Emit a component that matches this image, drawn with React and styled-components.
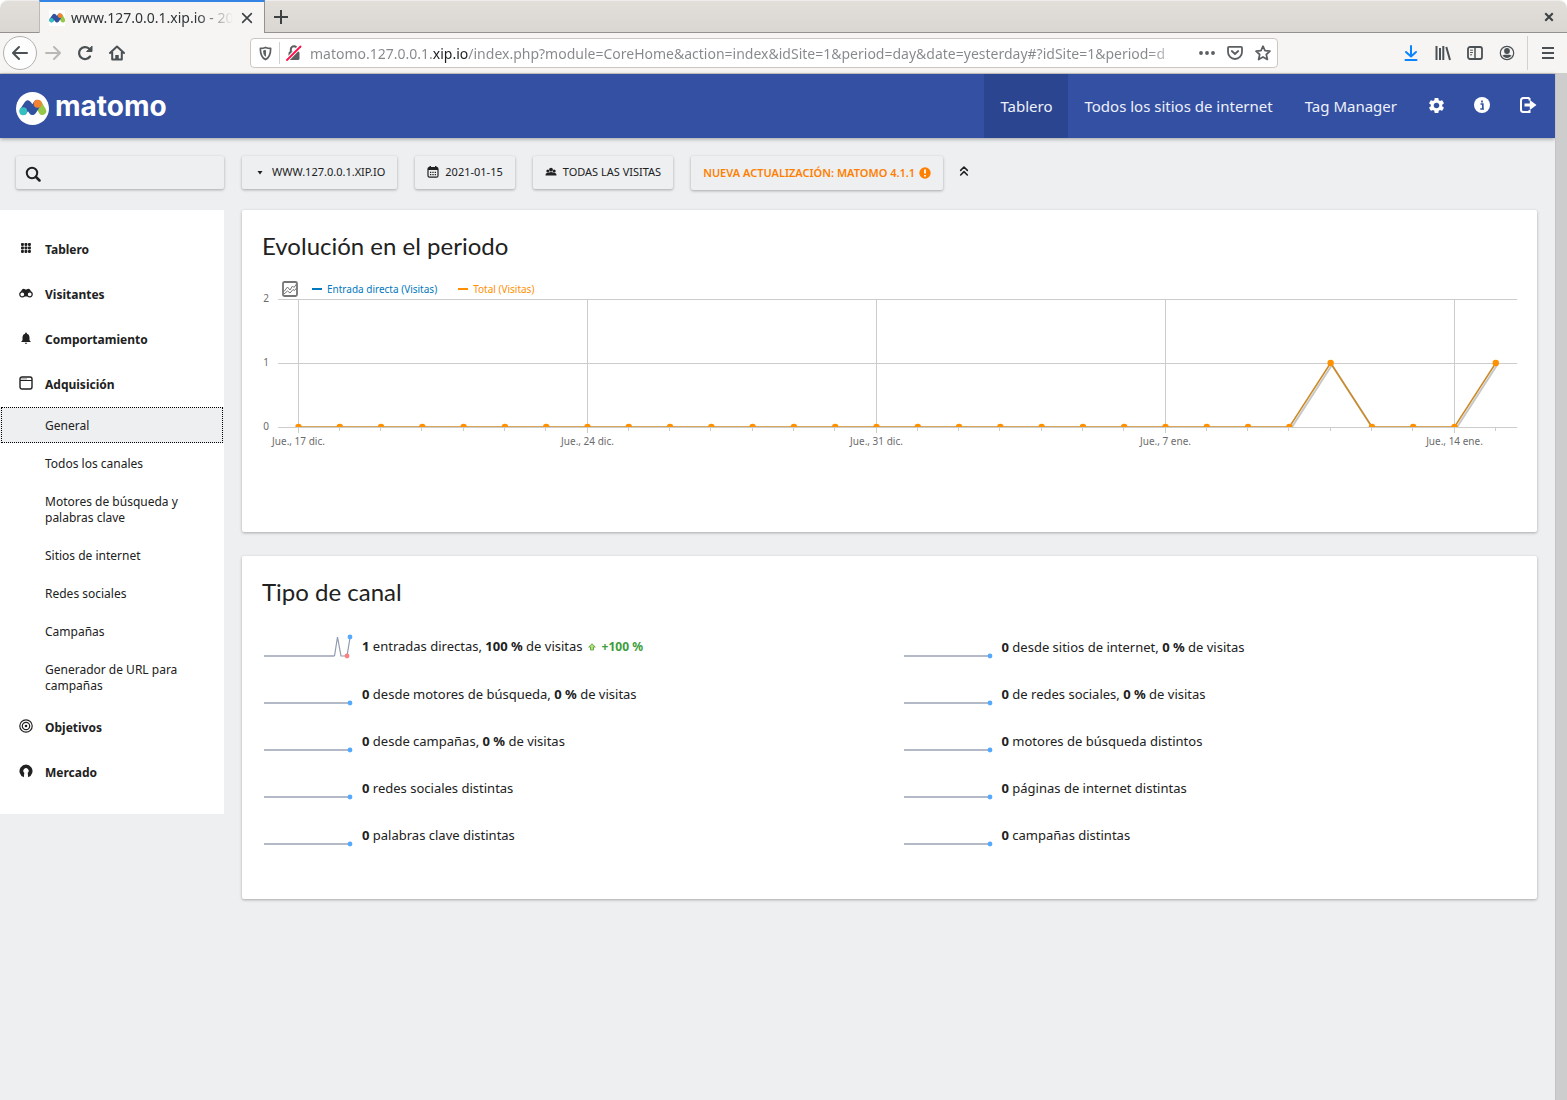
import React from 'react';
import styled, { createGlobalStyle, css } from 'styled-components';
import { MdSettings, MdNotifications } from 'react-icons/md';
import { ChevronsUp } from 'lucide-react';

const text = '"Noto Sans", "Open Sans", sans-serif';
const display = 'Lato, "Noto Sans", sans-serif';
const ink = '#212121';
const chromeInk = '#4a5053';

const GlobalStyle = createGlobalStyle`
  * { box-sizing: border-box; }
  body { margin: 0; background: #fff; font-family: ${text}; color: ${ink}; }
  button { border: 0; padding: 0; background: none; color: inherit; font: inherit; cursor: pointer; }
  a { color: inherit; text-decoration: none; }
  svg { display: block; flex: none; }
`;

const Window = styled.div`
  display: flex;
  flex-direction: column;
  min-height: 100vh;
`;

/* Browser frame */
const TabStrip = styled.div`
  display: flex;
  align-items: stretch;
  height: 33px;
  padding-left: 39px;
  background: linear-gradient(#e2dfdb, #dad6d2);
  border-bottom: 1px solid #94918e;
  border-top: 1px solid #efedeb;
  border-radius: 8px 8px 0 0;
`;
const Tab = styled.div`
  display: flex;
  align-items: center;
  gap: 6px;
  width: 226px;
  margin: -1px 0;
  padding: 0 9px;
  background: #f6f5f4;
  border-top: 2px solid #3584e4;
  border-left: 1px solid #bfbab5;
  border-right: 1px solid #94918e;
`;
const Favicon = styled.span`
  padding: 0;
  background: #fff;
`;
const TabTitle = styled.span`
  flex: 1;
  overflow: hidden;
  white-space: nowrap;
  font-size: 14px;
  line-height: 20px;
  color: #2e3436;
  mask-image: linear-gradient(to left, transparent, #000 36px);
`;
const StripButton = styled.button`
  display: grid;
  place-items: center;
  width: ${(p) => p.$width}px;
  color: #3c4144;
`;
const StripSpacer = styled.div`
  flex: 1;
`;
const Toolbar = styled.div`
  display: flex;
  align-items: center;
  height: 41px;
  padding: 0 3px;
  background: #f6f5f4;
  border-bottom: 1px solid #d0ccc8;
  color: ${chromeInk};
`;
const ToolButton = styled.button`
  display: grid;
  place-items: center;
  width: 32px;
  height: 32px;
  color: ${(p) => p.$color || 'inherit'};
  ${(p) => p.$round && css`
    width: 34px;
    height: 34px;
    border: 1px solid #b3b1af;
    border-radius: 50%;
    background: #fdfdfd;
  `}
`;
const Address = styled.div`
  display: flex;
  align-items: center;
  flex: 1;
  height: 30px;
  margin: 0 117px;
  border: 1px solid #cdc7c2;
  border-radius: 4px;
  background: #fff;
  color: #5b5f61;
`;
const AddressButton = styled.button`
  display: grid;
  place-items: center;
  width: 28px;
  height: 28px;
`;
const Rule = styled.span`
  width: 1px;
  height: ${(p) => p.$height}px;
  margin: 0 ${(p) => p.$gap || 0}px;
  background: #d3d1cf;
`;
const AddressInput = styled.input`
  flex: 1;
  min-width: 0;
  height: 28px;
  margin: 0 5px 0 2px;
  padding: 0;
  border: 0;
  outline: 0;
  font: 14px ${text};
  color: transparent;
  background: linear-gradient(to right, #85888a 122px, #1c1f20 122px, #1c1f20 158px, #85888a 158px, #85888a calc(100% - 40px), transparent);
  background-clip: text;
`;

/* Page */
const Viewport = styled.div`
  display: flex;
  flex: 1;
`;
const Page = styled.div`
  flex: 1;
  min-width: 0;
  background: #edeff1;
`;
const Scrollbar = styled.div`
  width: 12px;
  background: #cdcdcd;
  border-left: 1px solid #c4c4c4;
`;
const Header = styled.header`
  display: flex;
  align-items: center;
  justify-content: space-between;
  height: 64px;
  padding: 0 4px 0 16px;
  background: #3450a3;
  color: #fff;
  box-shadow: 0 1px 4px rgba(0, 0, 0, 0.35);
`;
const Brand = styled.a`
  display: flex;
  align-items: center;
  gap: 6px;
  padding-top: 4px;
`;
const Wordmark = styled.span`
  font: 700 28px/32px Inter, sans-serif;
  padding-bottom: 4px;
`;
const Nav = styled.nav`
  display: flex;
  height: 64px;
`;
const NavLink = styled.a`
  display: flex;
  align-items: center;
  padding: 0 16px;
  font-size: 15px;
  line-height: 20px;
  color: #eef1f8;
  background: ${(p) => (p.$active ? '#2c4590' : 'transparent')};
`;
const NavIcon = styled.a`
  display: grid;
  place-items: center;
  width: 46px;
  height: 62px;
`;
const Controls = styled.div`
  display: flex;
  gap: 18px;
  align-items: flex-start;
  padding: 18px 18px 0 16px;
`;
const raised = css`
  border-radius: 2px;
  box-shadow: 0 1px 3px rgba(0, 0, 0, 0.3);
`;
const Search = styled.label`
  display: flex;
  align-items: center;
  gap: 8px;
  width: 208px;
  height: 33px;
  padding: 2px 9px 0;
  ${raised}
`;
const SearchInput = styled.input`
  flex: 1;
  min-width: 0;
  border: 0;
  outline: 0;
  background: none;
  font: 13px ${text};
`;
const Control = styled.button`
  display: flex;
  align-items: center;
  gap: 6px;
  height: 33px;
  padding: 0 12px 1px;
  font-size: 11px;
  line-height: 16px;
  text-transform: uppercase;
  white-space: nowrap;
  ${raised}
  ${(p) => p.$alert && css`
    gap: 4px;
    height: 34px;
    padding-bottom: 0;
    font-weight: 600;
    color: #ff7f00;
  `}
`;
const Collapse = styled.button`
  display: grid;
  place-items: center;
  width: 14px;
  height: 30px;
  margin-left: -5px;
`;
const Body = styled.div`
  display: flex;
  align-items: flex-start;
  gap: 18px;
  padding: 20px 18px 24px 0;
`;
const Sidebar = styled.nav`
  flex: none;
  width: 224px;
  padding: 16px 0 20px;
  background: #fff;
`;
const Group = styled.a`
  display: flex;
  align-items: center;
  gap: 12px;
  height: 45px;
  padding: 2px 0 0 19px;
  font-size: 12px;
  font-weight: 700;
`;
const GroupIcon = styled.span`
  display: grid;
  place-items: center;
  width: 14px;
  height: 17px;
  padding-bottom: 3px;
`;
const SubLink = styled.a`
  display: block;
  padding: 12px 40px 10px 45px;
  font-size: 12px;
  line-height: 16px;
  ${(p) => p.$active && css`
    background: #edeff1;
    outline: 1px dotted #000;
    outline-offset: -2px;
    border: solid #fff;
    border-width: 1px 0;
    padding-top: 11px;
    padding-bottom: 9px;
  `}
`;
const Main = styled.main`
  flex: 1;
  min-width: 0;
  display: flex;
  flex-direction: column;
  gap: 24px;
`;
const Card = styled.section`
  padding: 20px;
  background: #fff;
  ${raised}
`;
const Title = styled.h2`
  margin: 0;
  font: 400 24px/32px ${display};
`;
const Legend = styled.div`
  display: flex;
  align-items: center;
  gap: 14px;
  height: 18px;
  margin-top: 18px;
  padding-left: 20px;
`;
const Series = styled.span`
  display: flex;
  align-items: center;
  gap: 5px;
  margin-right: 7px;
  font-size: 10px;
  line-height: 16px;
  color: ${(p) => p.$color};

  &::before {
    content: '';
    width: 10px;
    height: 2px;
    background: currentColor;
  }
`;
const Plot = styled.svg`
  width: 100%;
  height: auto;
  margin-bottom: 62px;
  overflow: visible;
  font-family: ${text};
  font-size: 10px;
  fill: #6b6b6b;
`;
const Metrics = styled.div`
  display: grid;
  grid-template-columns: 1fr 1fr;
  column-gap: 24px;
  padding: 15px 0 21px;
`;
const Metric = styled.div`
  display: flex;
  align-items: center;
  height: 47px;
  font-size: 13px;
  line-height: 20px;
`;
const Change = styled.strong`
  margin-left: 5px;
  font-size: 12px;
  color: #3a9e3a;

  svg {
    display: inline-block;
    margin-right: 6px;
  }
`;

const Stroke = ({ size = 16, width = 2, children, ...rest }) => (
  <svg width={size} height={size} viewBox="0 0 16 16" fill="none" stroke="currentColor"
    strokeWidth={width} strokeLinecap="round" strokeLinejoin="round" aria-hidden="true" {...rest}>
    {children}
  </svg>
);

const Mark = () => (
  <g>
    <path d="M18 13l4.500 7.500a3.700 3.700 0 0 0 6.500-3.500l-4.500-8z" fill="#95c748" />
    <path d="M7.500 18l4-6 4.500 6.500 4.500-7" fill="none" stroke="#3152a0" strokeWidth="7.400" strokeLinecap="round" strokeLinejoin="round" />
    <circle cx="7" cy="18.700" r="3.800" fill="#35bfc0" />
    <circle cx="21" cy="11.300" r="3.900" fill="#f38334" />
  </g>
);

const ShieldIcon = () => (
  <Stroke size={15} width={1.8}>
    <path d="M8 1.500c2 .9 3.700 1.100 5.500 1.100 0 5.400-.7 9.400-5.500 11.900C3.200 12 2.500 8 2.500 2.600 4.300 2.600 6 2.400 8 1.500z" />
    <path d="M8 5v6C6.300 9.500 6 7.500 6 5.400z" fill="currentColor" strokeWidth="1" />
  </Stroke>
);
const LockIcon = () => (
  <svg width="16" height="16" viewBox="0 0 16 16" aria-hidden="true">
    <path d="M4.800 7V4.500a3.200 3.200 0 0 1 6.400 0V7" fill="none" stroke="currentColor" strokeWidth="2" />
    <rect x="2.500" y="6.500" width="11" height="8.500" rx="1.500" fill="currentColor" />
    <path d="M1 15L14.500 1" stroke="#fff" strokeWidth="4" />
    <path d="M1 15L14.500 1.500" stroke="#ff0f4b" strokeWidth="1.800" strokeLinecap="round" />
  </svg>
);
const PocketIcon = () => (
  <Stroke width={1.8}>
    <path d="M2 1.800h12q1 0 1 1V7A7 7 0 0 1 1 7V2.800q0-1 1-1z" />
    <path d="M4.800 6L8 9l3.200-3" />
  </Stroke>
);
const LibraryIcon = () => (
  <Stroke><path d="M1.500 1v14M5 3v12M8.300 1v14M11.300 2L15 15" strokeLinecap="butt" /></Stroke>
);
const SidebarIcon = () => (
  <Stroke width={1.8}>
    <rect x="1" y="2" width="14" height="12" rx="2" />
    <path d="M8 2v12" strokeWidth="1.500" /><path d="M3.500 5.200h2M3.500 7.500h2M3.500 9.800h1.200" strokeWidth="1" />
  </Stroke>
);
const AccountIcon = () => (
  <svg width="16" height="16" viewBox="0 0 16 16" aria-hidden="true">
    <circle cx="8" cy="8" r="6.700" fill="none" stroke="currentColor" strokeWidth="1.200" />
    <circle cx="8" cy="6" r="2.900" fill="currentColor" />
    <path d="M3.500 10.500c1.500-1.200 2.500-.8 4.500-.8s3 -.4 4.500.8A5.300 5.300 0 0 1 3.500 10.500z" fill="currentColor" />
  </svg>
);
const InfoIcon = () => (
  <svg width="16" height="16" viewBox="0 0 16 16" aria-hidden="true">
    <circle cx="8" cy="8" r="8" fill="#fff" />
    <path d="M6.500 7h2.300v4.500M6.300 12h3.600M8 3.500v2" stroke="#3450a3" strokeWidth="1.700" fill="none" />
  </svg>
);
const ExitIcon = () => (
  <svg width="17" height="16" viewBox="0 0 17 16" aria-hidden="true">
    <path d="M9.500 1H3.500Q1 1 1 3.500v9Q1 15 3.500 15h6v-2M9.500 1v2.500" fill="none" stroke="#fff" strokeWidth="2" />
    <path d="M4.500 6.500h5.300V3l6.700 5-6.700 5V9.500H4.500z" fill="#fff" />
  </svg>
);
const CaretIcon = () => (
  <svg width="12" height="12" viewBox="0 0 12 12" aria-hidden="true"><path d="M3.500 5h5L6 8.500z" fill={ink} /></svg>
);
const CalendarIcon = () => (
  <svg width="12" height="12" viewBox="0 0 12 12" aria-hidden="true">
    <rect x="1" y="1.600" width="10" height="9.600" rx="1.500" fill="none" stroke={ink} strokeWidth="1.200" />
    <path d="M1 1.600h10v2.400H1zM2.500 0h1.500v2h-1.500zM8 0h1.500v2H8z" fill={ink} />
    <path d="M3 6.300h6M3 8.700h6" stroke={ink} strokeWidth="1.300" strokeDasharray="1.300 1.050" />
  </svg>
);
const PeopleIcon = () => (
  <svg width="12" height="12" viewBox="0 0 12 12" fill={ink} aria-hidden="true">
    <circle cx="2.800" cy="5" r="1.500" /><circle cx="9.200" cy="5" r="1.500" /><circle cx="6" cy="3.700" r="1.900" />
    <path d="M.5 9.500q0-2.700 2.300-2.700L6 6l3.200.8q2.300 0 2.300 2.700z" />
  </svg>
);
const AlertIcon = () => (
  <svg width="12" height="12" viewBox="0 0 12 12" aria-hidden="true">
    <circle cx="6" cy="6" r="5.700" fill="#ff7f00" />
    <path d="M6 2.500v4M6 7.900v1.700" stroke="#fff" strokeWidth="1.800" />
  </svg>
);
const GridIcon = () => (
  <svg width="10" height="10" viewBox="0 0 10 10" fill={ink} aria-hidden="true">
    {[0, 3.5, 7].map((y) => [0, 3.5, 7].map((x) => <rect key={`${x}${y}`} x={x} y={y} width="2.900" height="2.900" rx=".8" />))}
  </svg>
);
const BinocularsIcon = () => (
  <svg width="14" height="12" viewBox="0 0 14 12" aria-hidden="true">
    <path d="M3 2.500q1.800-1.700 3.300 0h1.400q1.500-1.700 3.300 0l2.500 4.500-5 2.500h-3l-5-2.500z" fill={ink} />
    <circle cx="3.300" cy="7.300" r="2.500" fill="#fff" stroke={ink} strokeWidth="1.200" />
    <circle cx="10.700" cy="7.300" r="2.500" fill="#fff" stroke={ink} strokeWidth="1.200" />
  </svg>
);
const BrowserIcon = () => (
  <svg width="14" height="14" viewBox="0 0 14 14" aria-hidden="true">
    <rect x="1" y="1" width="12" height="12" rx="2" fill="none" stroke={ink} strokeWidth="1.400" />
    <path d="M1 4.500h12" stroke={ink} /><path d="M2.500 2.900h5" stroke={ink} strokeDasharray="1 1" />
  </svg>
);
const TargetIcon = () => (
  <svg width="14" height="14" viewBox="0 0 14 14" fill="none" stroke={ink} strokeWidth="1.200" aria-hidden="true">
    <circle cx="7" cy="7" r="6.200" /><circle cx="7" cy="7" r="3.700" /><circle cx="7" cy="7" r="1.300" fill={ink} stroke="none" />
  </svg>
);
const MarketIcon = () => (
  <svg width="14" height="14" viewBox="0 0 14 14" aria-hidden="true">
    <path d="M4.800 13.200A6.500 6.500 0 1 1 9.200 13.200L8.700 8.800a2.600 2.600 0 1 0-3.400 0z" fill={ink} />
  </svg>
);
const PictureIcon = () => (
  <svg width="16" height="16" viewBox="0 0 16 16" fill="none" stroke="#757575" aria-hidden="true">
    <rect x="1" y="1" width="14" height="14" rx="1.500" strokeWidth="1.800" />
    <path d="M2 10.500L5.500 6l2.500 3 2.500-4 1.500 1.500L14.500 3M2 13l3.500-3 2.500 2 3-3.500 1.500 1L14.500 7" />
  </svg>
);
const UpIcon = () => (
  <svg width="8" height="8" viewBox="0 0 8 8" aria-hidden="true">
    <path d="M4 .8L7.300 4H5.500v3h-3V4H.7z" fill="#b5dd83" stroke="#5fa53a" strokeWidth=".9" strokeLinejoin="round" />
  </svg>
);

const groupsTop = [
  ['Tablero', GridIcon],
  ['Visitantes', BinocularsIcon],
  ['Comportamiento', () => <MdNotifications size={14} />],
  ['Adquisición', BrowserIcon],
];
const groupsBottom = [['Objetivos', TargetIcon], ['Mercado', MarketIcon]];
const subLinks = [
  'General', 'Todos los canales', 'Motores de búsqueda y palabras clave', 'Sitios de internet',
  'Redes sociales', 'Campañas', 'Generador de URL para campañas',
];

const MenuGroup = ({ label, icon: Icon }) => (
  <Group href="#"><GroupIcon><Icon /></GroupIcon>{label}</Group>
);

/* 30 days of visits; a week separates two labelled days */
const visits = Array.from({ length: 30 }, (_, i) => (i === 25 || i === 29 ? 1 : 0));
const weeks = ['Jue., 17 dic.', 'Jue., 24 dic.', 'Jue., 31 dic.', 'Jue., 7 ene.', 'Jue., 14 ene.'];
const dayX = (i) => 36.5 + (i * 289) / 7;
const valueY = (v) => 129 - v * 64;
const points = (dx, dy) => visits.map((v, i) => `${dayX(i) + dx},${valueY(v) + dy}`).join(' ');

const EvolutionChart = () => (
  <Plot viewBox="0 0 1255 152" role="img" aria-label="Evolución en el periodo">
    <defs><clipPath id="plot"><rect x="0" y="-4" width="1255" height="133" /></clipPath></defs>
    <g stroke="#cccccc">
      {[0, 1, 2].map((v) => <path key={v} d={`M16 ${129.5 - v * 64}H1255`} />)}
      {visits.map((_, i) => (
        <path key={i} d={i % 7 ? `M${Math.round(dayX(i)) - 0.5} 129v4` : `M${dayX(i)} 1v134`} />
      ))}
    </g>
    {[0, 1, 2].map((v) => <text key={v} x="7" y={132 - v * 64} textAnchor="end">{v}</text>)}
    {weeks.map((w, i) => <text key={w} x={dayX(i * 7)} y="147" textAnchor="middle">{w}</text>)}
    <g clipPath="url(#plot)">
      <polyline points={points(1.3, 2)} fill="none" stroke="#000" strokeOpacity=".22" strokeWidth="2" />
      <polyline points={points(0, 0)} fill="none" stroke="#cc8a26" strokeWidth="1.500" />
      {visits.map((v, i) => <circle key={i} cx={dayX(i)} cy={valueY(v)} r="3.200" fill="#ff9000" />)}
    </g>
  </Plot>
);

const Sparkline = ({ spike }) => (
  <svg width="100" height="26" viewBox="0 0 100 26" fill="none" aria-hidden="true">
    {spike ? (
      <>
        <path d="M2 22h70.500" stroke="#b4b9c8" strokeWidth="1.800" />
        <path d="M72.500 22L75.500 3l3.500 19h6l3-18" stroke="#8e9bb0" strokeWidth="1.200" />
        <circle cx="85" cy="22" r="2.400" fill="#ff7f7f" />
        <circle cx="88" cy="3" r="2.400" fill="#55aaff" />
      </>
    ) : (
      <>
        <path d="M2 22h86" stroke="#b4b9c8" strokeWidth="1.800" />
        <circle cx="88" cy="22" r="2.400" fill="#55aaff" />
      </>
    )}
  </svg>
);

const metrics = [
  { n: '1', label: 'entradas directas', share: '100 %', change: '+100 %' },
  { n: '0', label: 'desde sitios de internet', share: '0 %' },
  { n: '0', label: 'desde motores de búsqueda', share: '0 %' },
  { n: '0', label: 'de redes sociales', share: '0 %' },
  { n: '0', label: 'desde campañas', share: '0 %' },
  { n: '0', label: 'motores de búsqueda distintos' },
  { n: '0', label: 'redes sociales distintas' },
  { n: '0', label: 'páginas de internet distintas' },
  { n: '0', label: 'palabras clave distintas' },
  { n: '0', label: 'campañas distintas' },
];

export default function App() {
  return (
    <Window>
      <GlobalStyle />
      <TabStrip>
        <Tab>
          <Favicon><svg width="16" height="16" viewBox="3 2 26 26" aria-hidden="true"><Mark /></svg></Favicon>
          <TabTitle>www.127.0.0.1.xip.io - 2021</TabTitle>
          <StripButton $width={16} aria-label="Cerrar pestaña"><Stroke size={14} width={1.8}><path d="M3 3l10 10M13 3L3 13" /></Stroke></StripButton>
        </Tab>
        <StripButton $width={32} aria-label="Nueva pestaña"><Stroke><path d="M8 1v14M1 8h14" strokeLinecap="butt" /></Stroke></StripButton>
        <StripSpacer />
        <StripButton $width={36} aria-label="Cerrar ventana"><Stroke size={12} width={2.8}><path d="M3 3l10 10M13 3L3 13" strokeLinecap="butt" /></Stroke></StripButton>
      </TabStrip>
      <Toolbar>
        <ToolButton $round aria-label="Atrás"><Stroke><path d="M15 8H1.500M7 2L1 8l6 6" /></Stroke></ToolButton>
        <ToolButton $color="#b8b8b7" aria-label="Adelante"><Stroke><path d="M1 8h13.500M9 2l6 6-6 6" /></Stroke></ToolButton>
        <ToolButton aria-label="Recargar"><Stroke width={2.2}><path d="M13 11.500A6 6 0 1 1 12 3.500l1.500 1.800" /><path d="M15 1.500v5h-5z" fill="currentColor" strokeWidth="1" /></Stroke></ToolButton>
        <ToolButton aria-label="Inicio"><Stroke><path d="M1 8l7-6.500L15 8M3.200 7v7.500h9.600V7" /><path d="M8 14v-4" strokeWidth="3.500" strokeLinecap="butt" /></Stroke></ToolButton>
        <Address>
          <AddressButton aria-label="Protección"><ShieldIcon /></AddressButton>
          <Rule $height={22} />
          <AddressButton aria-label="Conexión no segura"><LockIcon /></AddressButton>
          <AddressInput
            aria-label="Dirección"
            defaultValue="matomo.127.0.0.1.xip.io/index.php?module=CoreHome&action=index&idSite=1&period=day&date=yesterday#?idSite=1&period=d"
          />
          <AddressButton aria-label="Acciones de página"><Stroke><path d="M2 8h.01M8 8h.01M14 8h.01" strokeWidth="3.800" /></Stroke></AddressButton>
          <AddressButton aria-label="Guardar en Pocket"><PocketIcon /></AddressButton>
          <AddressButton aria-label="Añadir a marcadores"><Stroke width={1.7}><path d="M8 1.200l2 4.500 5 .5-3.700 3.300 1.100 5L8 11.900l-4.400 2.600 1.100-5L1 6.200l5-.5z" /></Stroke></AddressButton>
        </Address>
        <ToolButton $color="#0a84ff" aria-label="Descargas"><Stroke><path d="M8 1v10M3 7L8 11.500 13 7M2.500 15h11" /></Stroke></ToolButton>
        <ToolButton aria-label="Biblioteca"><LibraryIcon /></ToolButton>
        <ToolButton aria-label="Barra lateral"><SidebarIcon /></ToolButton>
        <ToolButton aria-label="Cuenta"><AccountIcon /></ToolButton>
        <Rule $height={34} $gap={4} />
        <ToolButton aria-label="Menú"><Stroke><path d="M2 3h12M2 8h12M2 13h12" strokeLinecap="butt" /></Stroke></ToolButton>
      </Toolbar>
      <Viewport>
        <Page>
          <Header>
            <Brand href="#">
              <svg width="33" height="33" viewBox="0 0 32 32" aria-hidden="true"><circle cx="16" cy="16" r="16" fill="#fff" /><Mark /></svg>
              <Wordmark>matomo</Wordmark>
            </Brand>
            <Nav>
              <NavLink href="#" $active>Tablero</NavLink>
              <NavLink href="#">Todos los sitios de internet</NavLink>
              <NavLink href="#">Tag Manager</NavLink>
              <NavIcon href="#" aria-label="Administración"><MdSettings size={19} /></NavIcon>
              <NavIcon href="#" aria-label="Ayuda"><InfoIcon /></NavIcon>
              <NavIcon href="#" aria-label="Salir"><ExitIcon /></NavIcon>
            </Nav>
          </Header>
          <Controls>
            <Search>
              <Stroke><circle cx="7" cy="7" r="5.200" /><path d="M11 11l3.500 3.500" strokeWidth="2.500" /></Stroke>
              <SearchInput aria-label="Buscar" />
            </Search>
            <Control><CaretIcon />www.127.0.0.1.xip.io</Control>
            <Control><CalendarIcon />2021-01-15</Control>
            <Control><PeopleIcon />Todas las visitas</Control>
            <Control $alert>Nueva actualización: Matomo 4.1.1<AlertIcon /></Control>
            <Collapse aria-label="Contraer"><ChevronsUp size={16} strokeWidth={2.4} /></Collapse>
          </Controls>
          <Body>
            <Sidebar>
              {groupsTop.map(([label, icon]) => <MenuGroup key={label} label={label} icon={icon} />)}
              {subLinks.map((label, i) => <SubLink key={label} href="#" $active={i === 0}>{label}</SubLink>)}
              {groupsBottom.map(([label, icon]) => <MenuGroup key={label} label={label} icon={icon} />)}
            </Sidebar>
            <Main>
              <Card>
                <Title>Evolución en el periodo</Title>
                <Legend>
                  <PictureIcon />
                  <Series $color="#0277bd">Entrada directa (Visitas)</Series>
                  <Series $color="#ff8f00">Total (Visitas)</Series>
                </Legend>
                <EvolutionChart />
              </Card>
              <Card>
                <Title>Tipo de canal</Title>
                <Metrics>
                  {metrics.map((m) => (
                    <Metric key={m.label}>
                      <Sparkline spike={Boolean(m.change)} />
                      <span>
                        <strong>{m.n}</strong> {m.label}
                        {m.share && <>, <strong>{m.share}</strong> de visitas</>}
                        {m.change && <Change><UpIcon />{m.change}</Change>}
                      </span>
                    </Metric>
                  ))}
                </Metrics>
              </Card>
            </Main>
          </Body>
        </Page>
        <Scrollbar />
      </Viewport>
    </Window>
  );
}
